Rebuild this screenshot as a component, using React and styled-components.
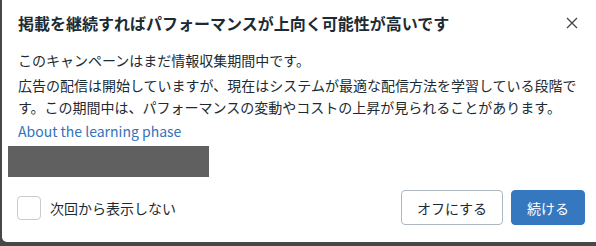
import React from 'react'
import styled, { createGlobalStyle } from 'styled-components'

const Global = createGlobalStyle`
  html, body {
    margin: 0;
    padding: 0;
    background: #474747;
    overflow: hidden;
  }
  body {
    font-family: "Noto Sans CJK JP", "Noto Sans", sans-serif;
    color: #1c2b33;
  }
`

const Dialog = styled.div`
  margin-left: 2px;
  margin-top: -6px;
  width: 600px;
  height: 248px;
  background: #fff;
  border-radius: 5px;
  display: flex;
  flex-direction: column;
  box-sizing: border-box;
  padding-top: 6px;
`

const Header = styled.div`
  display: flex;
  align-items: center;
  justify-content: space-between;
  padding: 12px 0 0 16px;
  width: 578px;
  box-sizing: border-box;
`

const Title = styled.h2`
  margin: 0;
  font-size: 16px;
  line-height: 22px;
  font-weight: 700;
`

const Close = styled.button`
  border: 0;
  background: none;
  padding: 0;
  width: 16px;
  height: 16px;
  display: flex;
  align-items: center;
  justify-content: center;
  cursor: pointer;
`

const Body = styled.div`
  padding: 15px 16px 0 16px;
  font-size: 14px;
  line-height: 22px;
`

const Para = styled.p`
  margin: 0 0 3px;
  width: 566px;
`

const Link = styled.a`
  color: #3572b9;
  text-decoration: none;
  display: block;
  line-height: 20px;
`

const Redacted = styled.div`
  margin: 5px 0 0 -10px;
  width: 201px;
  height: 31px;
  background: #606060;
`

const Footer = styled.div`
  display: flex;
  align-items: center;
  justify-content: space-between;
  padding: 13px 0 0 15px;
  width: 583px;
  box-sizing: border-box;
`

const CheckLabel = styled.label`
  display: flex;
  align-items: center;
  gap: 9px;
  font-size: 14px;
`

const Box = styled.span`
  width: 22px;
  height: 22px;
  border: 1px solid #c8ccd0;
  border-radius: 4px;
  background: #fff;
`

const Buttons = styled.div`
  display: flex;
  gap: 8px;
`

const Button = styled.button`
  height: 35px;
  width: ${p => (p.primary ? '74px' : '102px')};
  padding: 0;
  border-radius: 4px;
  font-family: inherit;
  font-size: 14px;
  border: 1px solid ${p => (p.primary ? '#3578c0' : '#aeb6bf')};
  background: ${p => (p.primary ? '#3578c0' : '#fff')};
  color: ${p => (p.primary ? '#fff' : '#1c2b33')};
  cursor: pointer;
`

export default function App() {
  return (
    <>
      <Global />
      <Dialog>
        <Header>
          <Title>掲載を継続すればパフォーマンスが上向く可能性が高いです</Title>
          <Close aria-label="閉じる">
            <svg width="12" height="12" viewBox="0 0 12 12">
              <path d="M1 1L11 11M11 1L1 11" stroke="#444" strokeWidth="1.3" />
            </svg>
          </Close>
        </Header>
        <Body>
          <Para>このキャンペーンはまだ情報収集期間中です。</Para>
          <Para>
            広告の配信は開始していますが、現在はシステムが最適な配信方法を学習している段階です。この期間中は、パフォーマンスの変動やコストの上昇が見られることがあります。
          </Para>
          <Link href="#">About the learning phase</Link>
          <Redacted />
        </Body>
        <Footer>
          <CheckLabel>
            <Box />
            次回から表示しない
          </CheckLabel>
          <Buttons>
            <Button>オフにする</Button>
            <Button primary>続ける</Button>
          </Buttons>
        </Footer>
      </Dialog>
    </>
  )
}
